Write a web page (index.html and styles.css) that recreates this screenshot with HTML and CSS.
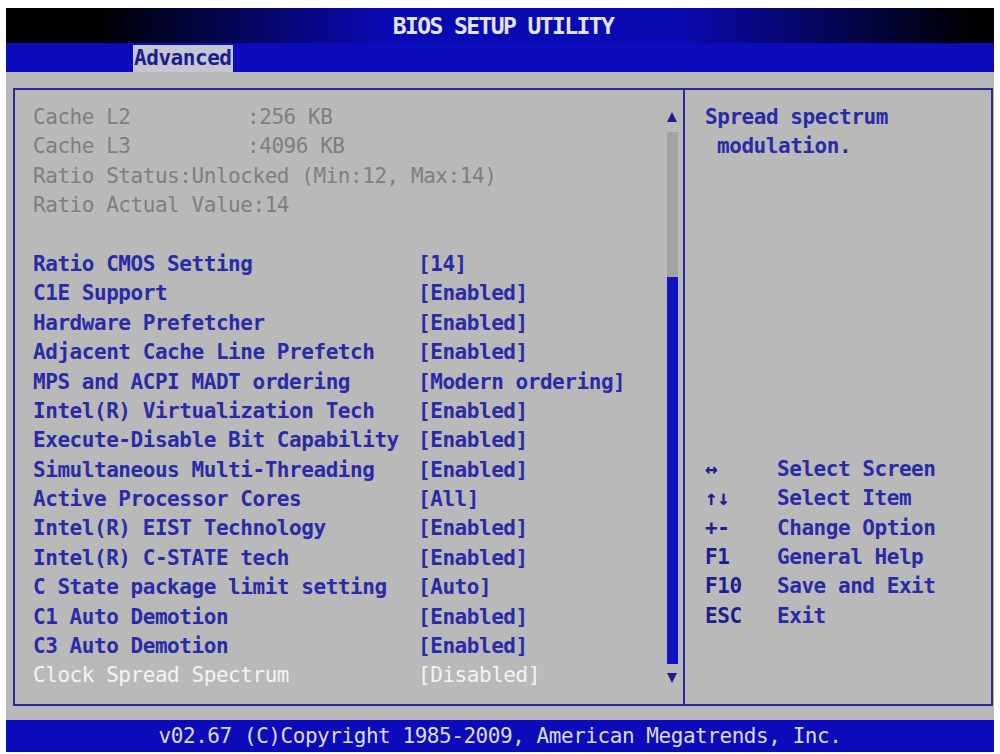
FILE: index.html
```html
<!DOCTYPE html>
<html lang="en">
<head>
    <meta charset="UTF-8">
    <meta name="viewport" content="width=device-width, initial-scale=1.0">
    <title>BIOS SETUP UTILITY</title>
    <link rel="stylesheet" href="styles.css">
</head>
<body>

<div class="screen">
    <header class="title-bar">BIOS SETUP UTILITY</header>

    <nav class="tab-bar">
        <span class="tab">Advanced</span>
    </nav>

    <div class="main">
        <!-- Settings list -->
        <section class="settings-panel">
            <div class="settings">
                <div class="row info"><span>Cache L2</span><span>:256 KB</span></div>
                <div class="row info"><span>Cache L3</span><span>:4096 KB</span></div>
                <div class="line info">Ratio Status:Unlocked (Min:12, Max:14)</div>
                <div class="line info">Ratio Actual Value:14</div>
                <div class="line"></div>
                <div class="row option"><span>Ratio CMOS Setting</span><span>[14]</span></div>
                <div class="row option"><span>C1E Support</span><span>[Enabled]</span></div>
                <div class="row option"><span>Hardware Prefetcher</span><span>[Enabled]</span></div>
                <div class="row option"><span>Adjacent Cache Line Prefetch</span><span>[Enabled]</span></div>
                <div class="row option"><span>MPS and ACPI MADT ordering</span><span>[Modern ordering]</span></div>
                <div class="row option"><span>Intel(R) Virtualization Tech</span><span>[Enabled]</span></div>
                <div class="row option"><span>Execute-Disable Bit Capability</span><span>[Enabled]</span></div>
                <div class="row option"><span>Simultaneous Multi-Threading</span><span>[Enabled]</span></div>
                <div class="row option"><span>Active Processor Cores</span><span>[All]</span></div>
                <div class="row option"><span>Intel(R) EIST Technology</span><span>[Enabled]</span></div>
                <div class="row option"><span>Intel(R) C-STATE tech</span><span>[Enabled]</span></div>
                <div class="row option"><span>C State package limit setting</span><span>[Auto]</span></div>
                <div class="row option"><span>C1 Auto Demotion</span><span>[Enabled]</span></div>
                <div class="row option"><span>C3 Auto Demotion</span><span>[Enabled]</span></div>
                <div class="row option selected"><span>Clock Spread Spectrum</span><span>[Disabled]</span></div>
            </div>

            <div class="scrollbar">
                <span class="arrow up"></span>
                <div class="track"><div class="thumb"></div></div>
                <span class="arrow down"></span>
            </div>
        </section>

        <!-- Help panel -->
        <aside class="help-panel">
            <div class="line">Spread spectrum</div>
            <div class="line indent">modulation.</div>

            <div class="keys">
                <div class="key-row"><span class="key">&#8596;</span><span>Select Screen</span></div>
                <div class="key-row"><span class="key">&#8593;&#8595;</span><span>Select Item</span></div>
                <div class="key-row"><span class="key">+-</span><span>Change Option</span></div>
                <div class="key-row"><span class="key">F1</span><span>General Help</span></div>
                <div class="key-row"><span class="key">F10</span><span>Save and Exit</span></div>
                <div class="key-row"><span class="key">ESC</span><span>Exit</span></div>
            </div>
        </aside>
    </div>

    <footer class="footer">v02.67 (C)Copyright 1985-2009, American Megatrends, Inc.</footer>
</div>

</body>
</html>
```

FILE: styles.css
```css
body {
    margin: 0;
    background-color: #ffffff;
    font-family: "DejaVu Sans Mono", "Liberation Mono", monospace;
    font-size: 21px;
    letter-spacing: -0.45px;
}

.screen {
    margin: 8px 0 0 6px;
    width: 988px;
    height: 744px;
    background-color: #b9b9b9;
    display: flex;
    flex-direction: column;
}

.title-bar {
    height: 35px;
    background: linear-gradient(to right, #000000 0%, #000000 9%, #0a0ab2 38%, #0a0ab2 68%, #000000 98%);
    color: #e4e4f0;
    font-weight: bold;
    font-size: 23px;
    letter-spacing: -1.6px;
    display: flex;
    align-items: center;
    justify-content: center;
    padding-left: 6px;
}

.tab-bar {
    height: 29px;
    background-color: #0c0cbc;
    display: flex;
    align-items: flex-end;
    padding-left: 127px;
}

.tab {
    height: 27px;
    line-height: 27px;
    padding: 0 1px;
    background-color: #c6c6d2;
    color: #1c1c8e;
    font-weight: bold;
}

.main {
    display: flex;
    height: 618px;
    margin: 16px 1px 0 7px;
}

.settings-panel {
    width: 672px;
    box-sizing: border-box;
    border: 2px solid #2a2a96;
    display: flex;
}

.settings {
    flex: 1;
    padding: 13px 0 0 18px;
}

.line,
.row {
    height: 29.4px;
    line-height: 29.4px;
    white-space: pre;
}

.row {
    display: grid;
    grid-template-columns: 385px auto;
}

.row.info {
    grid-template-columns: 214px auto;
}

.info {
    color: #7e7e7e;
}

.option {
    color: #2a2aa6;
    font-weight: bold;
}

.option.selected {
    color: #f4f4f4;
    font-weight: normal;
}

.scrollbar {
    width: 12px;
    margin-right: 5px;
    padding: 22px 0 21px;
    display: flex;
    flex-direction: column;
    align-items: center;
}

.arrow {
    width: 0;
    height: 0;
    border-left: 5px solid transparent;
    border-right: 5px solid transparent;
}

.arrow.up {
    border-bottom: 10px solid #1c1c8e;
}

.arrow.down {
    border-top: 10px solid #1c1c8e;
}

.track {
    flex: 1;
    width: 11px;
    margin: 10px 0 9px;
    background-color: #a2a2a2;
    display: flex;
    flex-direction: column;
}

.thumb {
    flex: 1;
    margin-top: 145px;
    background-color: #1212c0;
}

.help-panel {
    flex: 1;
    box-sizing: border-box;
    border: 2px solid #2a2a96;
    border-left: none;
    padding: 13px 0 0 20px;
    color: #2a2aa6;
    font-weight: bold;
}

.indent {
    padding-left: 12px;
}

.keys {
    margin-top: 293px;
}

.key-row {
    display: grid;
    grid-template-columns: 72px auto;
    height: 29.4px;
    line-height: 29.4px;
}

.key {
    color: #1c1c8e;
}

.footer {
    height: 32px;
    margin-top: 14px;
    background-color: #0c0cbc;
    color: #dcdcf0;
    display: flex;
    align-items: center;
    justify-content: center;
}
```
